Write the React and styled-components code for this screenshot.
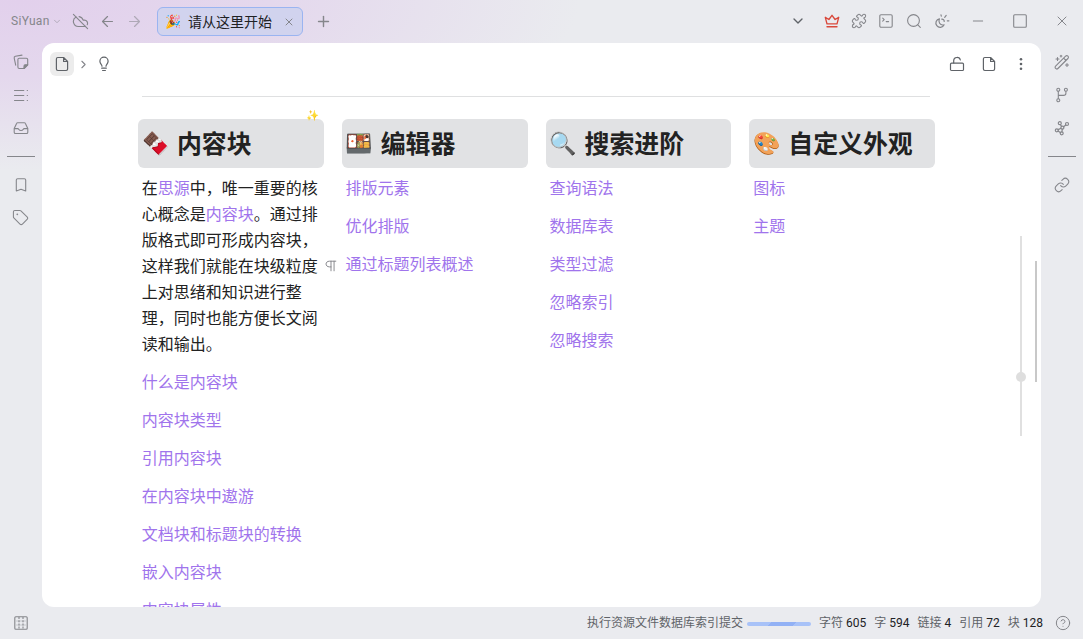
import styled, { createGlobalStyle } from "styled-components";
import {
  ArrowLeft,
  ArrowRight,
  ChevronDown,
  ChevronRight,
  CircleHelp,
  CloudOff,
  Link,
  Minus,
  Plus,
  Puzzle,
  Tag,
  X,
} from "lucide-react";

const GlobalStyle = createGlobalStyle`
  * {
    box-sizing: border-box;
  }

  body {
    margin: 0;
    overflow: hidden;
    font-family: "Liberation Sans", "Noto Sans CJK SC", "Noto Color Emoji", sans-serif;
  }
`;

const Wrapper = styled.div`
  display: flex;
  flex-direction: column;
  width: 1083px;
  height: 639px;
  color: #85868b;
  background:
    radial-gradient(ellipse 560px 170px at 20px 0, #e2d0ec 0%, #e4d8ed 45%, rgba(234, 235, 239, 0) 100%),
    #eaebef;
`;

const Toolbar = styled.header`
  display: flex;
  align-items: center;
  height: 43px;
  padding-bottom: 1px;
  flex-shrink: 0;
`;

const Brand = styled.div`
  width: 52px;
  padding-left: 11px;
  font-family: Roboto, sans-serif;
  font-size: 12px;
  letter-spacing: 0.3px;
  line-height: 16px;
`;

const IconBox = styled.div`
  display: flex;
  align-items: center;
  justify-content: center;
  flex-shrink: 0;
  width: ${({ $width }) => $width || 27}px;
  height: ${({ $height }) => $height || 24}px;
  color: ${({ $color }) => $color || "inherit"};
  opacity: ${({ $faded }) => ($faded ? 0.55 : 1)};
`;

const Tab = styled.div`
  display: flex;
  align-items: center;
  width: 146px;
  height: 29px;
  margin: 1px 0 0 6px;
  padding-left: 7px;
  border: 1px solid #9ab4f1;
  border-radius: 6px;
  background: #d1d3ee;
  color: #202124;
  font-size: 14px;

  .emoji {
    width: 23px;
    font-size: 13px;
    line-height: 20px;
  }

  .name {
    width: 90px;
    line-height: 20px;
    white-space: nowrap;
  }
`;

const WindowTools = styled.div`
  display: flex;
  align-items: center;
  margin-left: auto;
`;

const Body = styled.div`
  display: flex;
  height: 564px;
`;

const Dock = styled.aside`
  display: flex;
  flex-direction: column;
  align-items: center;
  width: 42px;
  padding: 2px 1px 0 0;
`;

const DockLine = styled.div`
  width: 28px;
  height: 1px;
  margin: 12px -1px 11px 0;
  background: #85868b;
`;

const Editor = styled.main`
  display: flex;
  flex-direction: column;
  position: relative;
  width: 999px;
  border-radius: 12px;
  overflow: hidden;
  background: #fff;
`;

const Breadcrumb = styled.div`
  display: flex;
  align-items: center;
  height: 42px;
  padding: 0 4px 0 8px;
  flex-shrink: 0;
  color: #5f6368;
`;

const DocButton = styled.div`
  display: flex;
  align-items: center;
  justify-content: center;
  width: 24px;
  height: 24px;
  border-radius: 6px;
  background: #ececec;
`;

const Divider = styled.hr`
  width: 788px;
  height: 1px;
  margin: 11px 0 22px 100px;
  border: 0;
  flex-shrink: 0;
  background: #dfe0e1;
`;

const Columns = styled.div`
  display: grid;
  grid-template-columns: repeat(4, 185.8px);
  column-gap: 18px;
  margin-left: 96px;
`;

const Heading = styled.h2`
  position: relative;
  display: flex;
  align-items: center;
  height: 49px;
  margin: 0 0 8px;
  padding: 0 4px;
  border-radius: 6px;
  background: #e1e2e4;
  color: #222;
  font-size: 24.9px;
  line-height: 36px;
  white-space: nowrap;

  .emoji {
    width: 34.9px;
    font-size: 22px;
    font-weight: 400;
  }
`;

const Sparkle = styled.span`
  position: absolute;
  top: -12px;
  right: 4px;
  font-size: 10.5px;
  font-weight: 400;
  line-height: 16px;
`;

const Paragraph = styled.p`
  position: relative;
  margin: 0 0 12px;
  padding-left: 3.8px;
  color: #222;
  font-size: 16px;
  line-height: 26px;
  white-space: nowrap;
`;

const Ref = styled.span`
  color: #a074ec;
`;

const BlockMark = styled.span`
  position: absolute;
  left: 186px;
  top: 77px;
  display: flex;
  align-items: center;
  height: 26px;
  color: #85868b;
`;

const History = styled.div`
  position: absolute;
  left: 978px;
  top: 193px;
  width: 2px;
  height: 200px;
  background: #e0e0e0;

  &::after {
    content: "";
    position: absolute;
    left: -4px;
    top: 136px;
    width: 10px;
    height: 10px;
    border-radius: 50%;
    background: #dedede;
  }
`;

const Scrollbar = styled.div`
  position: absolute;
  left: 993px;
  top: 218px;
  width: 2px;
  height: 121px;
  background: #c8c8c8;
`;

const Status = styled.footer`
  display: flex;
  align-items: center;
  height: 32px;
  padding-right: 8px;
  color: #5f6368;
  font-size: 12px;
  line-height: 18px;
  white-space: nowrap;

  .message {
    margin-left: auto;
  }
`;

const Progress = styled.div`
  width: 64px;
  height: 4px;
  margin: 1px 8px 0 4px;
  border-radius: 2px;
  background: linear-gradient(135deg, #a8c2f8 0 25%, #92b1f5 25% 50%, #a8c2f8 50% 75%, #92b1f5 75%);
  background-size: 50px 50px;
`;

const Counter = styled.span`
  margin-right: 8px;

  b {
    margin-left: 3px;
    color: #202124;
    font-family: Roboto, sans-serif;
    font-weight: 400;
  }
`;

function Glyph({ size = 16, stroke = 1.1, children }) {
  return (
    <svg
      width={size}
      height={size}
      viewBox="0 0 16 16"
      fill="none"
      stroke="currentColor"
      strokeWidth={stroke}
      strokeLinecap="round"
      strokeLinejoin="round"
    >
      {children}
    </svg>
  );
}

const FilesIcon = () => (
  <Glyph>
    <path d="M2.7 11.2 1.2 4.1c-.2-1 .3-1.6 1.2-1.8L9 1.1M4.9 5.6c0-.8.6-1.4 1.4-1.4h7c.8 0 1.4.6 1.4 1.4v5.2L11 14.5H6.3c-.8 0-1.4-.6-1.4-1.4z" />
    <path d="M14.7 10.8h-2.5c-.7 0-1.2.5-1.2 1.2v2.5z" fill="currentColor" />
  </Glyph>
);

const OutlineIcon = () => (
  <Glyph>
    <path d="M1.5 3.5h9.3M1.5 8.5h9.3M1.5 13.5h9.3M14.2 3.5h.3M14.2 8.5h.3M14.2 13.5h.3" />
  </Glyph>
);

const InboxIcon = () => (
  <Glyph>
    <path d="M1.2 8.6 3.6 3.4c.2-.5.6-.7 1.1-.7h6.6c.5 0 .9.2 1.1.7l2.4 5.2v3.6c0 .8-.5 1.3-1.3 1.3h-11c-.8 0-1.3-.5-1.3-1.3zM1.2 8.6h3.6c.6 0 .8.4 1.1.9.8 1.4 3.4 1.4 4.2 0 .3-.5.5-.9 1.1-.9h3.6" />
  </Glyph>
);

const BookmarkIcon = () => (
  <Glyph>
    <path d="M3.3 13.9V3c0-.8.5-1.3 1.3-1.3h6.8c.8 0 1.3.5 1.3 1.3v10.9L8 12.2z" />
  </Glyph>
);

const CrownIcon = () => (
  <Glyph stroke={1.35}>
    <path d="M3 10.8 1.3 4.3l3.6 2.2L8 2.3l3.1 4.2 3.6-2.2-1.7 6.5zM3 13.7h10" />
  </Glyph>
);

const TerminalIcon = () => (
  <Glyph>
    <rect x="1.8" y="1.8" width="12.4" height="12.4" rx="1.2" />
    <path d="m4.7 5.1 1.5 1.5-1.5 1.5M8.2 8.6h2.4" />
  </Glyph>
);

const SearchIcon = () => (
  <Glyph>
    <circle cx="7.5" cy="7.5" r="5.9" />
    <path d="m11.8 11.8 2.5 2.5" />
  </Glyph>
);

const ThemeIcon = () => (
  <Glyph stroke={1.2}>
    <path d="M5.4 5.8a4.3 4.3 0 1 0 4.7 6c-1.9.5-3.6-.1-4.5-1.5-.9-1.4-.8-3-.2-4.5zM7.8 6.2c1.3-.2 2.6 1 2.4 2.3M7 1.8l.3 1.3M12.2 2.4l-1.5 1.9M14.9 7.8h-1.6" />
  </Glyph>
);

const SquareIcon = () => (
  <Glyph>
    <rect x="1.7" y="1.7" width="12.6" height="12.6" rx="1" />
  </Glyph>
);

const DocIcon = () => (
  <Glyph stroke={1.2}>
    <path d="M9.6 1.5H3.8c-.8 0-1.4.6-1.4 1.4v10.2c0 .8.6 1.4 1.4 1.4h8.4c.8 0 1.4-.6 1.4-1.4V5.5zM9.6 1.5v4h4" />
  </Glyph>
);

const BulbIcon = () => (
  <Glyph stroke={1.2}>
    <path d="M6 10.2c0-1.5-2.1-2.3-2.1-4.9a4.1 4.1 0 0 1 8.2 0c0 2.6-2.1 3.4-2.1 4.9M5.7 12.2h4.6M6.6 14.5h2.8" />
  </Glyph>
);

const UnlockIcon = () => (
  <Glyph stroke={1.2}>
    <rect x="1.5" y="7.1" width="13" height="7.4" rx="1.1" />
    <path d="M4.7 7V4.6c0-3.9 5.9-4.2 6.6-.6" />
  </Glyph>
);

const WandIcon = () => (
  <Glyph>
    <path d="m1.6 12.2 10-10c1.6-1.5 3.9.8 2.3 2.3l-10 10c-1.5 1.5-3.8-.8-2.3-2.3zM9.7 4.2 12 6.5M3.5 3.5v3M2 5h3M7 1.2v1.7M6.2 2h1.7M13 9.5v3M11.5 11h3" />
  </Glyph>
);

const BranchIcon = () => (
  <Glyph>
    <circle cx="4.3" cy="2.8" r="1.5" />
    <circle cx="4.3" cy="13.2" r="1.5" />
    <circle cx="11.9" cy="2.8" r="1.5" />
    <path d="M4.3 4.4v7.2M11.9 4.4v1.8c0 1.5-1 2.2-2.4 2.2H4.3" />
  </Glyph>
);

const GraphIcon = () => (
  <Glyph stroke={1.2}>
    <circle cx="5.8" cy="3.2" r="1.5" />
    <circle cx="13" cy="4" r="1.5" />
    <circle cx="8.4" cy="7.7" r="1.5" />
    <circle cx="2.8" cy="10.3" r="1.5" />
    <circle cx="7.7" cy="13.3" r="1.5" />
    <path d="m6.3 4.6 1.3 1.7M9.6 6.8l2.2-1.8M6.9 8.3l-2.7 1.3M8.3 9.2l-.4 2.6M4 11.1l2.3 1.4" />
  </Glyph>
);

const DockIcon = () => (
  <Glyph>
    <rect x="1.8" y="1.8" width="12.4" height="12.4" rx="1" />
    <path d="M6 2v12M10 2v12" strokeDasharray="2 1.2" strokeLinecap="butt" />
    <path d="M3.5 6h9M3.5 10h9" strokeWidth=".6" opacity=".6" />
  </Glyph>
);

const ParagraphIcon = () => (
  <Glyph size={14} stroke={1.1}>
    <path d="M13.5 2.5H6.3C1 2.5 1 9 6.3 9H8M8 2.5v11M11.5 2.5v11" />
  </Glyph>
);

const MoreIcon = () => (
  <Glyph>
    <g fill="currentColor" stroke="none">
      <circle cx="8" cy="3.2" r="1.3" />
      <circle cx="8" cy="8" r="1.3" />
      <circle cx="8" cy="12.8" r="1.3" />
    </g>
  </Glyph>
);

const columns = [
  {
    emoji: "🍫",
    title: "内容块",
    links: [
      "什么是内容块",
      "内容块类型",
      "引用内容块",
      "在内容块中遨游",
      "文档块和标题块的转换",
      "嵌入内容块",
      "内容块属性",
    ],
  },
  {
    emoji: "🍱",
    title: "编辑器",
    links: ["排版元素", "优化排版", "通过标题列表概述"],
  },
  {
    emoji: "🔍",
    title: "搜索进阶",
    links: ["查询语法", "数据库表", "类型过滤", "忽略索引", "忽略搜索"],
  },
  { emoji: "🎨", title: "自定义外观", links: ["图标", "主题"] },
];

const counters = [
  ["字符", 605],
  ["字", 594],
  ["链接", 4],
  ["引用", 72],
  ["块", 128],
];

function Header() {
  return (
    <Toolbar>
      <Brand>SiYuan</Brand>
      <IconBox $width={10} $faded>
        <ChevronDown size={11} strokeWidth={2.2} />
      </IconBox>
      <IconBox $width={36}>
        <CloudOff size={17} strokeWidth={1.6} />
      </IconBox>
      <IconBox $width={19}>
        <ArrowLeft size={17} strokeWidth={1.7} />
      </IconBox>
      <IconBox $width={34} $faded>
        <ArrowRight size={17} strokeWidth={1.7} />
      </IconBox>
      <Tab>
        <span className="emoji">🎉</span>
        <span className="name">请从这里开始</span>
        <IconBox $width={22} $color="#85868b">
          <X size={12} strokeWidth={2} />
        </IconBox>
      </Tab>
      <IconBox $width={40}>
        <Plus size={17} strokeWidth={2} />
      </IconBox>
      <WindowTools>
        <IconBox $width={40} $color="#5f6368">
          <ChevronDown size={16} strokeWidth={2} />
        </IconBox>
        <IconBox $color="#d9483b">
          <CrownIcon />
        </IconBox>
        <IconBox>
          <Puzzle size={16} strokeWidth={1.6} />
        </IconBox>
        <IconBox $width={28}>
          <TerminalIcon />
        </IconBox>
        <IconBox>
          <SearchIcon />
        </IconBox>
        <IconBox $width={30}>
          <ThemeIcon />
        </IconBox>
        <IconBox $width={42}>
          <Minus size={16} strokeWidth={1.5} />
        </IconBox>
        <IconBox $width={42}>
          <SquareIcon />
        </IconBox>
        <IconBox $width={42}>
          <X size={16} strokeWidth={1.5} />
        </IconBox>
      </WindowTools>
    </Toolbar>
  );
}

function Intro() {
  return (
    <Paragraph>
      在<Ref>思源</Ref>中，唯一重要的核
      <br />
      心概念是<Ref>内容块</Ref>。通过排
      <br />
      版格式即可形成内容块，
      <br />
      这样我们就能在块级粒度
      <br />
      上对思绪和知识进行整
      <br />
      理，同时也能方便长文阅
      <br />
      读和输出。
      <BlockMark>
        <ParagraphIcon />
      </BlockMark>
    </Paragraph>
  );
}

export default function App() {
  return (
    <Wrapper>
      <GlobalStyle />
      <Header />
      <Body>
        <Dock>
          <IconBox $height={33}>
            <FilesIcon />
          </IconBox>
          <IconBox $height={33}>
            <OutlineIcon />
          </IconBox>
          <IconBox $height={33}>
            <InboxIcon />
          </IconBox>
          <DockLine />
          <IconBox $height={33}>
            <BookmarkIcon />
          </IconBox>
          <IconBox $height={33}>
            <Tag size={17} strokeWidth={1.5} />
          </IconBox>
        </Dock>
        <Editor>
          <Breadcrumb>
            <DocButton>
              <DocIcon />
            </DocButton>
            <IconBox $width={18} $color="#85868b">
              <ChevronRight size={13} strokeWidth={2} />
            </IconBox>
            <IconBox $width={24}>
              <BulbIcon />
            </IconBox>
            <WindowTools>
              <IconBox $width={32}>
                <UnlockIcon />
              </IconBox>
              <IconBox $width={32}>
                <DocIcon />
              </IconBox>
              <IconBox $width={32}>
                <MoreIcon />
              </IconBox>
            </WindowTools>
          </Breadcrumb>
          <Divider />
          <Columns>
            {columns.map(({ emoji, title, links }, index) => (
              <section key={title}>
                <Heading>
                  <span className="emoji">{emoji}</span>
                  {title}
                  {index === 0 && <Sparkle>✨</Sparkle>}
                </Heading>
                {index === 0 && <Intro />}
                {links.map((link) => (
                  <Paragraph key={link}>
                    <Ref>{link}</Ref>
                  </Paragraph>
                ))}
              </section>
            ))}
          </Columns>
          <History />
          <Scrollbar />
        </Editor>
        <Dock>
          <IconBox $height={33}>
            <WandIcon />
          </IconBox>
          <IconBox $height={33}>
            <BranchIcon />
          </IconBox>
          <IconBox $height={33}>
            <GraphIcon />
          </IconBox>
          <DockLine />
          <IconBox $height={33}>
            <Link size={16} strokeWidth={1.6} />
          </IconBox>
        </Dock>
      </Body>
      <Status>
        <IconBox $width={41} $color="#85868b">
          <DockIcon />
        </IconBox>
        <span className="message">执行资源文件数据库索引提交</span>
        <Progress />
        {counters.map(([label, count]) => (
          <Counter key={label}>
            {label}
            <b>{count}</b>
          </Counter>
        ))}
        <IconBox $width={24} $color="#85868b">
          <CircleHelp size={16} strokeWidth={1.5} />
        </IconBox>
      </Status>
    </Wrapper>
  );
}
